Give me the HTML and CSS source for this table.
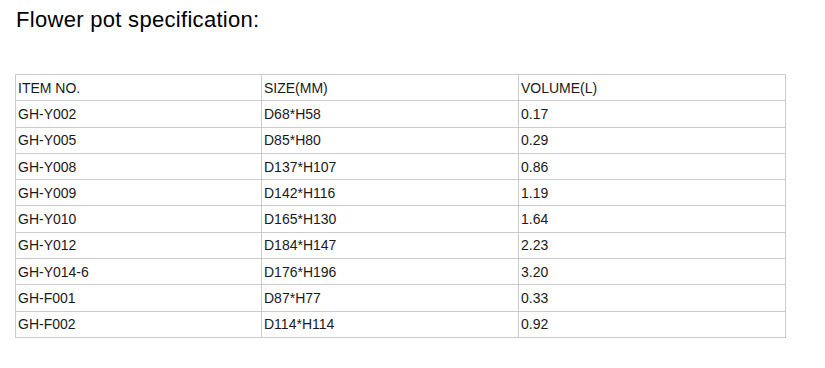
FILE: index.html
```html
<!DOCTYPE html>
<html lang="en">
<head>
<meta charset="utf-8">
<title>Flower pot specification</title>
<link rel="stylesheet" href="styles.css">
</head>
<body>
<div class="page">
  <h1 class="title">Flower pot specification:</h1>
  <table class="spec">
    <colgroup>
      <col class="c1"><col class="c2"><col class="c3">
    </colgroup>
    <tbody>
      <tr class="head"><td>ITEM NO.</td><td>SIZE(MM)</td><td>VOLUME(L)</td></tr>
      <tr><td>GH-Y002</td><td>D68*H58</td><td>0.17</td></tr>
      <tr><td>GH-Y005</td><td>D85*H80</td><td>0.29</td></tr>
      <tr><td>GH-Y008</td><td>D137*H107</td><td>0.86</td></tr>
      <tr><td>GH-Y009</td><td>D142*H116</td><td>1.19</td></tr>
      <tr><td>GH-Y010</td><td>D165*H130</td><td>1.64</td></tr>
      <tr><td>GH-Y012</td><td>D184*H147</td><td>2.23</td></tr>
      <tr><td>GH-Y014-6</td><td>D176*H196</td><td>3.20</td></tr>
      <tr><td>GH-F001</td><td>D87*H77</td><td>0.33</td></tr>
      <tr><td>GH-F002</td><td>D114*H114</td><td>0.92</td></tr>
    </tbody>
  </table>
</div>
</body>
</html>
```

FILE: styles.css
```css
html, body {
  margin: 0;
  padding: 0;
  background: #ffffff;
}

.page {
  padding: 9px 0 0 15px;
  font-family: "Liberation Sans", Arial, sans-serif;
  color: #1a1a1a;
}

.title {
  margin: 0 0 0 1px;
  font-size: 22px;
  line-height: 22px;
  font-weight: normal;
  letter-spacing: 0.3px;
  color: #000;
}

.spec {
  margin-top: 43px;
  border-collapse: collapse;
  table-layout: fixed;
  width: 770px;
  font-size: 14px;
}

.c1 { width: 246px; }
.c2 { width: 257px; }
.c3 { width: 267px; }

.spec td {
  border: 1px solid #cbcbcb;
  height: 25.3px;
  padding: 0 0 0 2px;
  vertical-align: middle;
  line-height: 16px;
  white-space: nowrap;
}
```
